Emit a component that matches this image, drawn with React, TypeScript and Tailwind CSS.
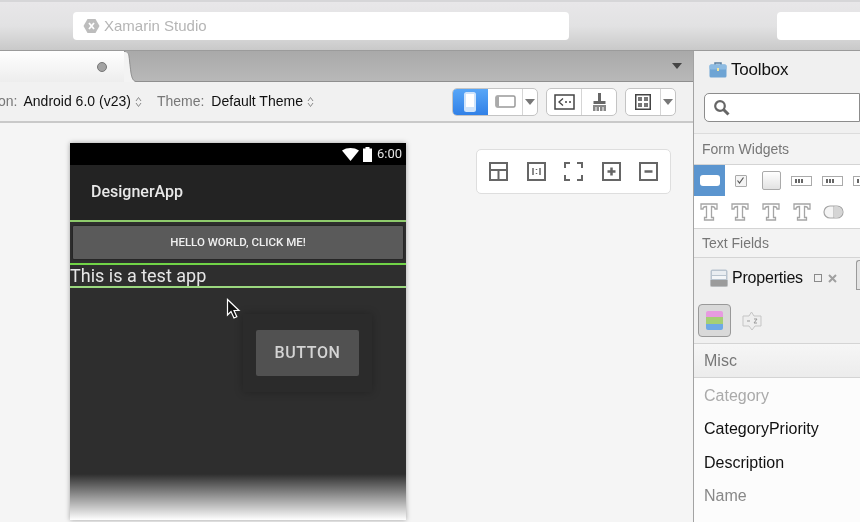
import React from "react";

const Updown = () => (
  <svg width="7" height="12" viewBox="0 0 7 12" className="ml-[4px]">
    <path d="M1 5 L3.5 1.5 L6 5 M1 7 L3.5 10.5 L6 7" fill="none" stroke="#8a8a8a" strokeWidth="1" />
  </svg>
);

const Caret = ({ c = "#777" }: { c?: string }) => (
  <svg width="10" height="6" viewBox="0 0 10 6"><path d="M0 0H10L5 6Z" fill={c} /></svg>
);

const ZoomIcon = ({ children }: { children?: React.ReactNode }) => (
  <svg width="19" height="19" viewBox="0 0 19 19" fill="none" stroke="#666" strokeWidth="2">{children}</svg>
);

const T = () => (
  <svg width="20" height="20" viewBox="0 0 20 20">
    <path d="M2 2H18V7H16C16 5 15 4.500 12.500 4.500V15.500H14.500V18H5.500V15.500H7.500V4.500C5 4.500 4 5 4 7H2Z" fill="#fff" stroke="#a5a5a5" strokeWidth="1.300" />
  </svg>
);

const Seg = () => (
  <svg width="21" height="14" viewBox="0 0 21 14">
    <rect x="1" y="1" width="19" height="12" rx="6" fill="#f4f4f4" stroke="#a5a5a5" strokeWidth="1.200" />
    <path d="M11 1V13" stroke="#a5a5a5" />
    <path d="M11 1.500H14A5.500 5.500 0 0 1 14 12.500H11Z" fill="#d5d5d5" />
  </svg>
);

const Slot = () => (
  <div className="w-[21px] h-[10px] bg-white border border-[#aaa] flex items-center pl-[3px] gap-[1px]">
    <i className="w-[2px] h-[4px] bg-[#666]" /><i className="w-[2px] h-[4px] bg-[#666]" /><i className="w-[2px] h-[4px] bg-[#666]" />
  </div>
);

function Toolbox() {
  return (
    <aside className="w-[167px] shrink-0 border-l border-[#a3a3a3] bg-[#f0f0f0] flex flex-col overflow-hidden">
      <div className="h-[37px] flex items-center pl-[15px] shrink-0">
        <svg width="18" height="17" viewBox="0 0 18 17">
          <path d="M6 4V2H12V4" fill="none" stroke="#5a7e9e" strokeWidth="1.500" />
          <rect x="0.500" y="3.500" width="17" height="13" rx="1.500" fill="#6ea4d4" />
          <rect x="0.500" y="3.500" width="17" height="5" rx="1.500" fill="#8dbbe2" />
          <rect x="8" y="7" width="2" height="3" fill="#f2e6a0" />
        </svg>
        <span className="ml-[4px] text-[17px] text-[#111] tracking-[-0.2px]">Toolbox</span>
      </div>
      <div className="h-[46px] pt-[5px] pl-[10px] shrink-0 border-b border-[#dcdcdc]">
        <div className="h-[29px] bg-white border border-[#8c8c8c] rounded-l-[5px] flex items-center pl-[8px]">
          <svg width="17" height="17" viewBox="0 0 17 17" fill="none" stroke="#666" strokeWidth="2.200">
            <circle cx="7" cy="7" r="4.800" /><path d="M10.500 10.500L15.500 15.500" strokeWidth="3" />
          </svg>
        </div>
      </div>
      <div className="h-[31px] shrink-0 flex items-center pl-[8px] text-[14px] text-[#777] bg-[#f3f3f3] border-b border-[#d4d4d4]">Form Widgets</div>
      <div className="h-[63px] shrink-0 bg-white flex flex-col">
        <div className="h-[31px] flex items-center">
          <div className="w-[31px] h-[31px] bg-[#5b95cf] flex items-center justify-center">
            <div className="w-[20px] h-[11px] bg-white rounded-[3px]" />
          </div>
          <div className="w-[31px] flex justify-center">
            <div className="w-[12px] h-[12px] bg-[#f4f4f4] border border-[#aaa] rounded-[1px] flex items-center justify-center">
              <svg width="9" height="9" viewBox="0 0 9 9"><path d="M1.500 4.500L3.500 7L7.500 1.500" fill="none" stroke="#555" strokeWidth="1.200" /></svg>
            </div>
          </div>
          <div className="w-[30px] flex justify-center">
            <div className="w-[19px] h-[19px] rounded-[2px] border border-[#aaa] bg-gradient-to-b from-white to-[#e2e2e2]" />
          </div>
          <div className="w-[31px] flex justify-center"><Slot /></div>
          <div className="w-[31px] flex justify-center"><Slot /></div>
          <div className="flex-1 pl-[5px] overflow-hidden"><Slot /></div>
        </div>
        <div className="flex-1 flex items-center pl-[5px] gap-[11px]">
          <T /><T /><T /><T /><Seg />
        </div>
      </div>
      <div className="h-[30px] shrink-0 flex items-center pl-[8px] text-[14px] text-[#777] bg-[#f3f3f3] border-y border-[#d4d4d4]">Text Fields</div>
      <div className="h-[40px] shrink-0 flex items-center pl-[16px] relative">
        <svg width="18" height="18" viewBox="0 0 18 18">
          <rect x="0.500" y="0.500" width="17" height="17" rx="2" fill="#b9c4cf" />
          <rect x="2" y="2" width="14" height="4" fill="#e9edf1" />
          <rect x="2" y="7" width="14" height="3" fill="#f4f6f8" />
          <rect x="0.500" y="11" width="17" height="6.500" fill="#9b9b9b" />
        </svg>
        <span className="ml-[4px] text-[16px] text-[#111] tracking-[-0.2px]">Properties</span>
        <span className="ml-[11px] w-[8px] h-[8px] border border-[#8a8a8a]" />
        <svg width="9" height="9" viewBox="0 0 9 9" className="ml-[6px]"><path d="M1 1L8 8M8 1L1 8" stroke="#a0a0a0" strokeWidth="2" /></svg>
        <span className="absolute left-[162px] top-[2px] w-[6px] h-[30px] border-l border-t border-b border-[#9a9a9a] rounded-tl-[3px] bg-[#e4e4e4]" />
      </div>
      <div className="h-[46px] shrink-0 flex items-center pl-[4px] border-b border-[#d4d4d4]">
        <div className="w-[33px] h-[33px] rounded-[4px] border border-[#999] bg-[#d9d9d9] flex items-center justify-center">
          <div className="w-[17px] h-[19px] rounded-[2px] overflow-hidden flex flex-col">
            <i className="h-1/3 bg-[#e79be0]" /><i className="h-1/3 bg-[#a5cf75]" /><i className="h-1/3 bg-[#6ea9e6]" />
          </div>
        </div>
        <svg width="20" height="22" viewBox="0 0 20 22" className="ml-[11px]">
          <path d="M1 6H7L9.500 2L12 6H19V16H13L10 20L7 16H1Z" fill="#eee" stroke="#c5c5c5" />
          <path d="M5 11H8M12 9H15L12 13H15" fill="none" stroke="#999" />
        </svg>
      </div>
      <div className="h-[34px] shrink-0 flex items-center pl-[10px] text-[16px] text-[#777] bg-gradient-to-b from-[#f6f6f6] to-[#ececec] border-b border-[#d4d4d4]">Misc</div>
      <div className="flex-1 bg-[#fcfcfc] text-[16px] pl-[10px] pt-[1px] relative">
        <div className="h-[33.500px] flex items-center text-[#aaa]">Category</div>
        <div className="h-[33.500px] flex items-center text-[#111]">CategoryPriority</div>
        <div className="h-[33.500px] flex items-center text-[#111]">Description</div>
        <div className="h-[33.500px] flex items-center text-[#888]">Name</div>
      </div>
    </aside>
  );
}

function Phone() {
  return (
    <div className="relative w-[336px] h-[377px] bg-[#2e2e2e] shadow-[0_0_5px_rgba(0,0,0,0.35)] flex flex-col font-['Roboto',sans-serif]">
      <div className="h-[22px] shrink-0 bg-black flex items-center justify-end pr-[4px] text-white">
        <svg width="17" height="13" viewBox="0 0 17 13"><path d="M0 2.500C5 -0.800 12 -0.800 17 2.500L8.500 13Z" fill="#fff" /></svg>
        <svg width="11" height="15" viewBox="0 0 11 15" className="ml-[3px]"><path d="M3.500 0H7.500V1.500H10V15H1V1.500H3.500Z" fill="#fff" /></svg>
        <span className="ml-[4px] text-[13px] text-[#e4e4e4]">6:00</span>
      </div>
      <div className="h-[55px] shrink-0 bg-[#232323] flex items-center pl-[21px] pb-[1px] text-[16px] font-medium text-[#e8e8e8]">DesignerApp</div>
      <div className="h-[2px] shrink-0 bg-[#8ecb6c]" />
      <div className="h-[41px] shrink-0 px-[3px] pt-[4px] bg-[#2e2e2e]">
        <div className="h-[33px] bg-[#5a5a5a] shadow-[0_0_2px_rgba(0,0,0,0.6)] rounded-[1px] flex items-center justify-center text-[11.500px] font-medium text-[#f0f0f0]">HELLO WORLD, CLICK ME!</div>
      </div>
      <div className="h-[2px] shrink-0 bg-[#71d447]" />
      <div className="h-[21px] shrink-0 flex items-center text-[18px] text-[#e6e6e6] whitespace-nowrap">This is a test app</div>
      <div className="h-[2px] shrink-0 bg-[#9bd87f]" />

      <div className="absolute left-[173px] top-[171px] w-[129px] h-[78px] bg-[#2b2b2b] shadow-[0_0_8px_rgba(0,0,0,0.25)] flex items-center justify-center">
        <div className="w-[103px] h-[46px] rounded-[2px] bg-[#515151] flex items-center justify-center text-[16px] font-medium tracking-[0.6px] text-[#d4d4d4]">BUTTON</div>
      </div>
      <svg width="15" height="22" viewBox="0 0 15 22" className="absolute left-[156px] top-[155px]">
        <path d="M1.500 1.500V17L5 13.500L8 20L10.800 18.800L8 12.500H13Z" fill="#111" stroke="#fff" strokeWidth="1.200" />
      </svg>
      <div className="absolute left-0 right-0 bottom-0 h-[46px] bg-gradient-to-b from-[#2e2e2e00] via-[#ffffff80] to-[#ffffff]" />
    </div>
  );
}

export default function App() {
  return (
    <div className="w-[860px] h-[522px] overflow-hidden flex flex-col bg-[#f5f5f5] font-['Liberation_Sans',Arial,sans-serif] blur-[0.35px]">
      <header className="h-[50px] shrink-0 bg-gradient-to-b from-[#e8e7e9] via-[#e2e2e3] to-[#c9c9c9] border-t-2 border-[#d6d6d8] flex items-start pt-[10px] pl-[73px]">
        <div className="w-[496px] h-[28px] bg-white rounded-[4px] flex items-center pl-[10px] text-[15px] text-[#b5b5b5]">
          <svg width="17" height="16" viewBox="0 0 17 16">
            <path d="M4.500 1H12.500L16.500 8L12.500 15H4.500L0.500 8Z" fill="#bdbdbd" />
            <path d="M6 5L11 11M11 5L6 11" stroke="#fff" strokeWidth="1.800" />
          </svg>
          <span className="ml-[4px]">Xamarin Studio</span>
        </div>
        <div className="ml-[208px] flex-1 h-[28px] bg-white rounded-l-[4px]" />
      </header>
      <div className="flex-1 flex min-h-0 border-t border-[#9b9b9b]">
        <main className="flex-1 min-w-0 flex flex-col">
          <div className="h-[31px] shrink-0 bg-gradient-to-b from-[#a9a9a9] to-[#b8b8b8] flex items-stretch border-b border-[#8f8f8f]">
            <div className="w-[124px] relative -mb-[1px] bg-gradient-to-b from-white to-[#ededed] flex items-center justify-end pr-[17px]">
              <span className="w-[10px] h-[10px] rounded-full bg-[#a3a3a3] border border-[#777]" />
            </div>
            <svg width="12" height="31" viewBox="0 0 12 31" className="-mb-[1px] shrink-0">
              <path d="M0 0C6 0 4.500 4 7 22C8 28 9.500 30 12 31H0Z" fill="#f3f3f3" stroke="none" />
              <path d="M0 0.500C6 0.500 4.500 4 7 22C8 28 9.500 30 12 30.500" fill="none" stroke="#8f8f8f" />
            </svg>
            <div className="flex-1 flex items-center justify-end pr-[11px] pb-[1px]"><Caret c="#444" /></div>
          </div>
          <div className="h-[41px] shrink-0 bg-[#f1f1f1] border-b-2 border-[#c9c9c9] flex items-center text-[14px] pr-[17px]">
            <span className="text-[#777] -ml-[2px]">on:</span>
            <span className="ml-[6px] text-[#111]">Android 6.0 (v23)</span>
            <Updown />
            <span className="ml-[15px] text-[#777]">Theme:</span>
            <span className="ml-[7px] text-[#111]">Default Theme</span>
            <Updown />
            <div className="ml-auto flex items-center">
              <div className="h-[28px] w-[86px] flex rounded-[5px] overflow-hidden border border-[#c4c4c4] bg-white">
                <div className="w-[36px] -my-[1px] -ml-[1px] bg-gradient-to-b from-[#5aa8f8] to-[#2f7fe6] flex items-center justify-center">
                  <svg width="14" height="22" viewBox="0 0 14 22"><rect x="1" y="1" width="12" height="20" rx="2.500" fill="#cfe4fb" /><rect x="3" y="3" width="8" height="13" fill="#fff" /></svg>
                </div>
                <div className="w-[34px] flex items-center justify-center">
                  <svg width="21" height="13" viewBox="0 0 21 13"><rect x="1" y="1" width="19" height="11" rx="1.500" fill="#fff" stroke="#999" strokeWidth="1.500" /><rect x="1" y="1" width="3" height="11" fill="#aaa" /></svg>
                </div>
                <div className="flex-1 border-l border-[#d5d5d5] flex items-center justify-center"><Caret /></div>
              </div>
              <div className="ml-[8px] h-[28px] w-[71px] flex rounded-[5px] border border-[#c4c4c4] bg-white">
                <div className="w-[35px] flex items-center justify-center border-r border-[#d5d5d5]">
                  <svg width="21" height="16" viewBox="0 0 21 16"><rect x="1" y="1" width="19" height="14" fill="#fff" stroke="#444" strokeWidth="1.500" /><path d="M9 4.500L5 8L9 11.500" fill="none" stroke="#444" strokeWidth="1.300" /><path d="M11 8H13M15 8H17" stroke="#444" strokeWidth="1.500" /></svg>
                </div>
                <div className="flex-1 flex items-center justify-center">
                  <svg width="15" height="20" viewBox="0 0 15 20"><path d="M6 1H9V9H13.500V12H1.500V9H6Z" fill="#666" /><path d="M1 13H14V19H1Z" fill="#888" /><path d="M4 15V19M7.500 15V19M11 15V19" stroke="#fff" /></svg>
                </div>
              </div>
              <div className="ml-[8px] h-[28px] w-[51px] flex rounded-[5px] border border-[#c4c4c4] bg-white">
                <div className="w-[35px] flex items-center justify-center border-r border-[#d5d5d5]">
                  <svg width="16" height="16" viewBox="0 0 16 16"><rect x="0.750" y="0.750" width="14.500" height="14.500" fill="#fff" stroke="#444" strokeWidth="1.500" /><path d="M3 3H7V7H3ZM9 3H13V7H9ZM3 9H7V13H3ZM9 9H13V13H9Z" fill="#777" /></svg>
                </div>
                <div className="flex-1 flex items-center justify-center"><Caret /></div>
              </div>
            </div>
          </div>
          <div className="flex-1 min-h-0 bg-[#f5f5f5] flex items-start pl-[70px] pt-[20px]">
            <Phone />
            <div className="ml-[70px] mt-[6px] w-[195px] h-[45px] bg-white rounded-[5px] border border-[#dedede] flex items-center justify-between px-[12px]">
              <ZoomIcon><rect x="1" y="1" width="17" height="17" /><path d="M1 8H18M9.500 8V18" /></ZoomIcon>
              <ZoomIcon><rect x="1" y="1" width="17" height="17" /><path d="M6 6V13M9.500 7V8M9.500 11V12M13 6V13" strokeWidth="1.500" /></ZoomIcon>
              <ZoomIcon><path d="M1 6V1H6M13 1H18V6M18 13V18H13M6 18H1V13" /></ZoomIcon>
              <ZoomIcon><rect x="1" y="1" width="17" height="17" /><path d="M5.500 9.500H13.500M9.500 5.500V13.500" strokeWidth="2.500" /></ZoomIcon>
              <ZoomIcon><rect x="1" y="1" width="17" height="17" /><path d="M5.500 9.500H13.500" strokeWidth="2.500" /></ZoomIcon>
            </div>
          </div>
        </main>
        <Toolbox />
      </div>
    </div>
  );
}
